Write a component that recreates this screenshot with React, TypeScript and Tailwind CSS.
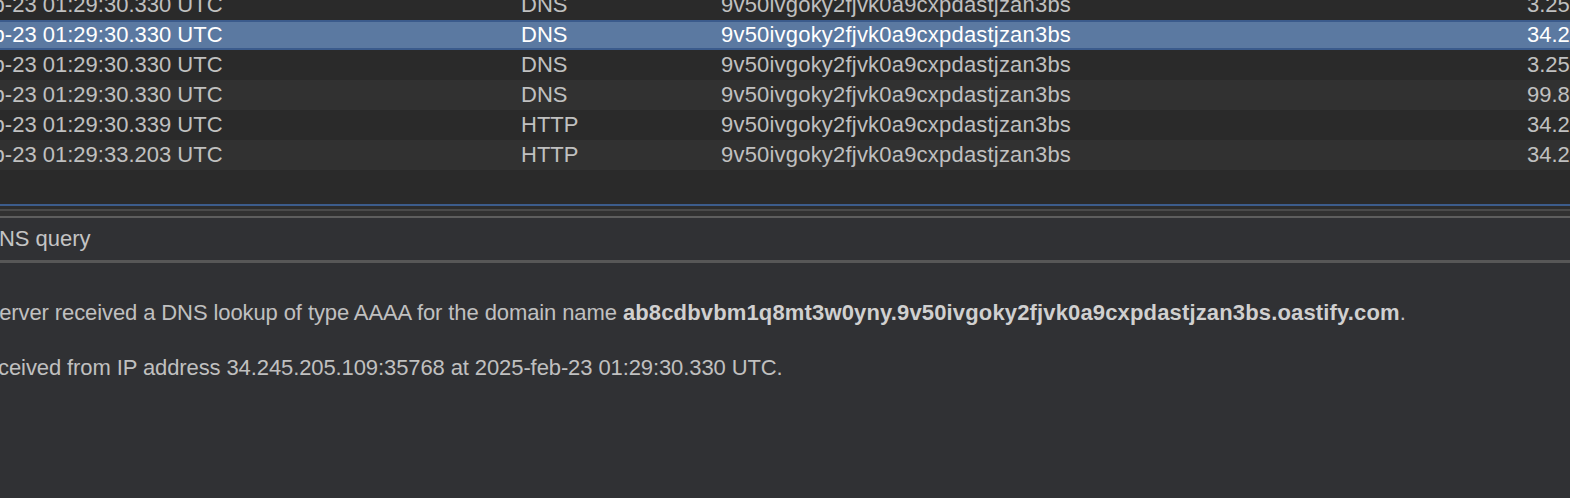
type Interaction = {
  time: string;
  type: string;
  payload: string;
  source: string;
};

const rows: Interaction[] = [
  { time: "2025-feb-23 01:29:30.330 UTC", type: "DNS", payload: "9v50ivgoky2fjvk0a9cxpdastjzan3bs", source: "3.251.104.9" },
  { time: "2025-feb-23 01:29:30.330 UTC", type: "DNS", payload: "9v50ivgoky2fjvk0a9cxpdastjzan3bs", source: "34.245.205.109" },
  { time: "2025-feb-23 01:29:30.330 UTC", type: "DNS", payload: "9v50ivgoky2fjvk0a9cxpdastjzan3bs", source: "3.251.104.9" },
  { time: "2025-feb-23 01:29:30.330 UTC", type: "DNS", payload: "9v50ivgoky2fjvk0a9cxpdastjzan3bs", source: "99.80.208.236" },
  { time: "2025-feb-23 01:29:30.339 UTC", type: "HTTP", payload: "9v50ivgoky2fjvk0a9cxpdastjzan3bs", source: "34.245.205.109" },
  { time: "2025-feb-23 01:29:33.203 UTC", type: "HTTP", payload: "9v50ivgoky2fjvk0a9cxpdastjzan3bs", source: "34.245.205.109" },
];

const selectedIndex = 1;

function Row({ row, index }: { row: Interaction; index: number }) {
  const selected = index === selectedIndex;
  const base = selected
    ? "bg-[#5b79a1] text-white border-y-2 border-[#3b5b8c]"
    : index % 2 === 0
      ? "bg-[#2a2a2a] text-[#c0c0c0]"
      : "bg-[#313131] text-[#c0c0c0]";

  return (
    <div className={`flex h-[30px] items-center whitespace-nowrap ${base}`}>
      <div className="w-[603px] shrink-0">{row.time}</div>
      <div className="w-[200px] shrink-0">{row.type}</div>
      <div className="w-[806px] shrink-0 tracking-[0.2px]">{row.payload}</div>
      <div className="flex-1">{row.source}</div>
    </div>
  );
}

export default function App() {
  return (
    <div className="w-[1570px] h-[498px] overflow-hidden bg-[#303134] flex flex-col font-['Liberation_Sans',Arial,sans-serif] text-[22px] leading-[30px]">
      {/* interactions table */}
      <div className="h-[204px] shrink-0 bg-[#2a2a2a] overflow-hidden">
        <div className="w-[1700px] ml-[-82px] mt-[-10px]">
          {rows.map((row, i) => (
            <Row key={i} row={row} index={i} />
          ))}
        </div>
      </div>

      {/* split pane divider */}
      <div className="h-[2px] shrink-0 bg-[#3c5c8b]" />
      <div className="h-[3px] shrink-0 bg-[#2d2d2d]" />
      <div className="h-[2px] shrink-0 bg-[#4a4a4a]" />
      <div className="h-[5px] shrink-0 bg-[#313131]" />
      <div className="h-[2px] shrink-0 bg-[#5e5e5e]" />

      {/* description header */}
      <div className="h-[42px] shrink-0 bg-[#303134] leading-[42px] text-[#c4c4c4] whitespace-nowrap">
        <span className="ml-[-17px]">DNS query</span>
      </div>
      <div className="h-[3px] shrink-0 bg-[#575757]" />

      {/* description body */}
      <div className="flex-1 pt-[35px] text-[#c0c0c0] whitespace-nowrap tracking-[-0.1px]">
        <p className="ml-[-180px]">
          The Collaborator server received a DNS lookup of type AAAA for the domain name{" "}
          <b className="font-bold text-[#d0d0d0] tracking-[0.15px]">
            ab8cdbvbm1q8mt3w0yny.9v50ivgoky2fjvk0a9cxpdastjzan3bs.oastify.com
          </b>
          .
        </p>
        <p className="ml-[-180px] mt-[25px]">
          The lookup was received from IP address 34.245.205.109:35768 at 2025-feb-23 01:29:30.330 UTC.
        </p>
      </div>
    </div>
  );
}
